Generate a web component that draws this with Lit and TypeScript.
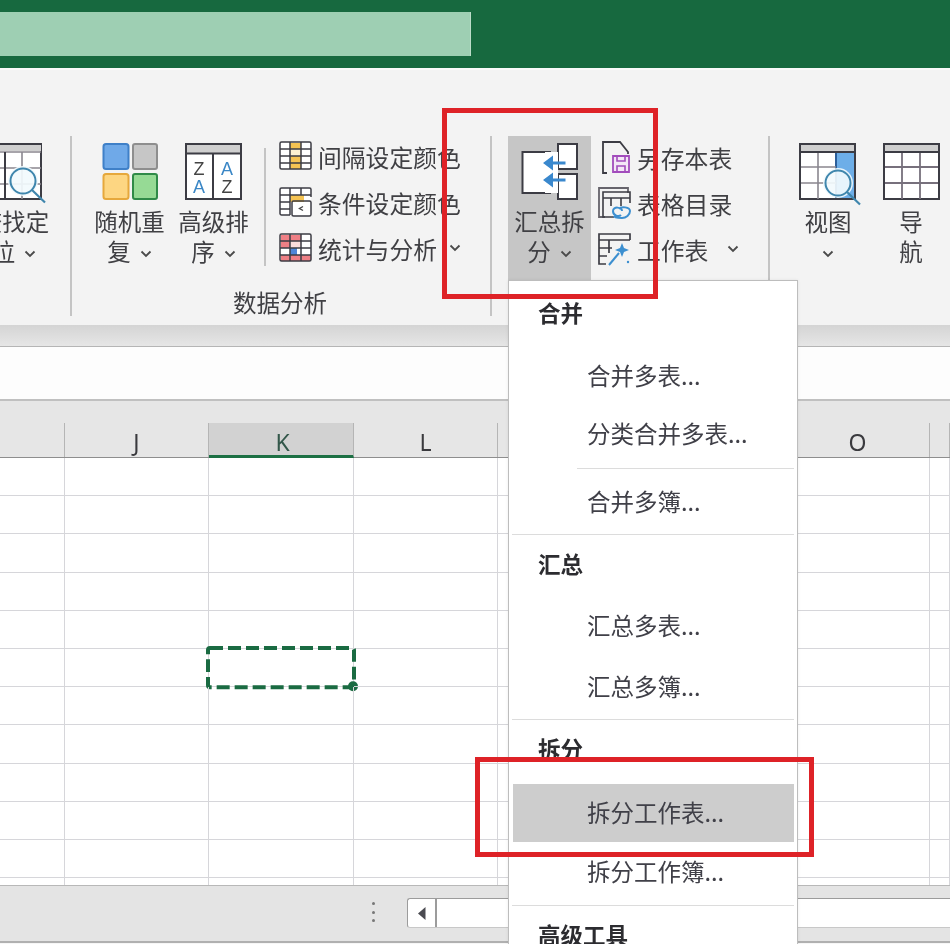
import { LitElement, html, css, svg } from "lit";
import { customElement } from "lit/decorators.js";

const chevPath = svg`<path d="M1.500 1.500 6 6l4.500-4.500" fill="none" stroke="#4a4a4a" stroke-width="1.800"/>`;
const chev = html`<svg class="chev" viewBox="0 0 12 8">${chevPath}</svg>`;
const chevAlone = html`<svg class="chev alone" viewBox="0 0 12 8">${chevPath}</svg>`;
const L = "#3c3c44";

const iconRandom = html`<svg class="ic58" viewBox="0 0 58 58">
  <rect x="2.500" y="1" width="25" height="25" rx="2.500" fill="#6fa9e8" stroke="#3f80c8" stroke-width="2"/>
  <rect x="32" y="1" width="24" height="25" rx="2" fill="#c6c6c6" stroke="#8e8e8e" stroke-width="2"/>
  <rect x="2.500" y="31" width="25" height="25" rx="2.500" fill="#fdd682" stroke="#e6a83c" stroke-width="2"/>
  <rect x="32" y="31" width="24" height="25" rx="2" fill="#96da95" stroke="#2f8a48" stroke-width="2"/>
</svg>`;
const iconSort = html`<svg class="ic58" viewBox="0 0 58 58">
  <rect x="1" y="1" width="55" height="55" fill="#fff" stroke="${L}" stroke-width="2"/>
  <rect x="2" y="2" width="53" height="8" fill="#cfcfcf"/><path d="M1 10.500H56M28 10v46" stroke="${L}" stroke-width="2"/>
  <text class="az" x="14" y="32" fill="#444">Z</text><text class="az" x="14" y="50" fill="#3b87c6">A</text>
  <text class="az" x="42" y="32" fill="#3b87c6">A</text><text class="az" x="42" y="50" fill="#444">Z</text>
</svg>`;
const lens = (cx: number, cy: number) => svg`<circle cx="${cx}" cy="${cy}" r="15" fill="#f2fafd" fill-opacity=".92"/><circle cx="${cx}" cy="${cy}" r="12.500" fill="none" stroke="#3f86ad" stroke-width="2"/><path d="M${cx + 9} ${cy + 9}l13 12.500" stroke="#3f86ad" stroke-width="2.200"/>`;
const iconFind = html`<svg class="ic58" viewBox="0 0 58 58">
  <rect x="-20" y="1" width="76" height="55" fill="#fff" stroke="${L}" stroke-width="2"/><rect x="-20" y="2" width="76" height="6" fill="#cfcfcf"/>
  <path d="M-20 9H56M-20 25H56M-20 41H56M37 9v47" stroke="#8a878f" stroke-width="1.600"/><path d="M20 9v47" stroke="${L}" stroke-width="2"/>
  ${lens(38, 38)}
</svg>`;
const iconView = html`<svg class="ic58" viewBox="0 0 58 58">
  <rect x="1" y="1" width="55" height="55" fill="#fff" stroke="${L}" stroke-width="2"/><rect x="2" y="2" width="53" height="7" fill="#cfcfcf"/>
  <rect x="37" y="9" width="18" height="46" fill="#6daee8"/><path d="M37 9v46" stroke="#2c5f9a" stroke-width="2"/>
  <path d="M2 24H37M2 40H37M19 9v47" stroke="#8a878f" stroke-width="1.600"/><path d="M1 9H56" stroke="${L}" stroke-width="2"/>
  ${lens(39, 40)}
</svg>`;
const iconNav = html`<svg class="ic58" viewBox="0 0 58 58">
  <rect x="2" y="1" width="55" height="55" fill="#fff" stroke="${L}" stroke-width="2"/><rect x="3" y="2" width="53" height="7" fill="#cfcfcf"/>
  <path d="M3 24H56M3 40H56M20 9v47M38 9v47" stroke="#77707c" stroke-width="1.800"/><path d="M2 9H57" stroke="${L}" stroke-width="2"/>
</svg>`;
const smallGrid = (fill: unknown) => html`<svg class="ic32" viewBox="0 0 33 30">
  <rect x="1" y="1" width="31" height="27" rx="1.500" fill="#fff"/>${fill}
  <g fill="none" stroke="${L}" stroke-width="1.500"><rect x="1" y="1" width="31" height="27" rx="1.500"/><path d="M1 8H32M1 15H32M1 22H32M11 1v27M22 1v27"/></g>
</svg>`;
const iconBand = smallGrid(svg`<rect x="11" y="2" width="11" height="6" fill="#f6c453"/><rect x="11" y="15" width="11" height="13" fill="#f6c453"/><rect x="11" y="8" width="11" height="7" fill="#fdf1d0"/>`);
const iconCond = html`<svg class="ic32" viewBox="0 0 33 30">
  <rect x="1" y="1" width="31" height="27" rx="1.500" fill="#fff"/><rect x="11" y="8" width="14" height="7" fill="#f6c453"/>
  <g fill="none" stroke="${L}" stroke-width="1.500"><path d="M11 28H2.500A1.500 1.500 0 0 1 1 26.500V2.500A1.500 1.500 0 0 1 2.500 1H30.500A1.500 1.500 0 0 1 32 2.500V10M1 8H32M1 15H11M1 22H11M11 1v27M22 1v7"/><rect x="13" y="14" width="19" height="15" rx="1.500"/></g>
  <path d="M24 19.500 20.500 21.500 24 23.500" fill="none" stroke="#444" stroke-width="1.400"/>
</svg>`;
const iconStat = smallGrid(svg`<rect x="2" y="2" width="20" height="13" fill="#ef7f85"/><rect x="11" y="8" width="11" height="7" fill="#fbdcdc"/><rect x="2" y="22" width="30" height="6" fill="#ef7f85"/><rect x="11" y="15" width="7" height="7" fill="#4f86d8"/>`);
const iconSplit = html`<svg class="ic58" viewBox="0 0 58 58">
  <path d="M30 9H1.500V50H30" fill="#fff" stroke="${L}" stroke-width="2"/>
  <rect x="37" y="1" width="19" height="25" fill="#fff" stroke="${L}" stroke-width="2"/>
  <rect x="37" y="31" width="19" height="25" fill="#fff" stroke="${L}" stroke-width="2"/>
  <rect x="24" y="9" width="13" height="41" fill="#fff"/>
  <path d="M44.500 20H30M44.500 37H30" stroke="#3a88cd" stroke-width="3"/>
  <path d="M22 20 32 12.500V27.500ZM22 37 32 29.500V44.500Z" fill="#3a88cd"/>
</svg>`;
const iconSave = html`<svg class="ic32 t" viewBox="-2 0 33 33">
  <path d="M7 32H3V1H20l8 10V13" fill="none" stroke="${L}" stroke-width="1.800"/>
  <path d="M13 15H29V31H13Z" fill="#f3e6f6" stroke="#a24cbc" stroke-width="1.800"/><path d="M17 15v5H25v-5M17 31v-6h8v6" fill="none" stroke="#a24cbc" stroke-width="1.600"/>
</svg>`;
const iconToc = html`<svg class="ic32 t" viewBox="0 0 33 33">
  <path d="M7 30H1V1H30V6" fill="none" stroke="#66646c" stroke-width="1.800"/>
  <path d="M16 30H5V5H32V16M5 11H32M13 11v8M23 11v8" fill="none" stroke="${L}" stroke-width="1.600"/>
  <path d="M24 24c0-4-9-5-9 0s6 6 8 4M21 22c2-3 11-2 11 2s-4 7-8 7-8-1-8-2" fill="none" stroke="#3c8fd0" stroke-width="2"/>
</svg>`;
const iconWand = html`<svg class="ic32 t" viewBox="0 0 33 33">
  <path d="M8 31H1V1H32V7M1 7H32M1 15H14M1 23H9M11 7v13" fill="none" stroke="${L}" stroke-width="1.700"/>
  <path d="M11 32 21 20" stroke="#3c8fd0" stroke-width="2"/><path d="M24 10l2 5 5 2-5 2-2 5-2-5-5-2 5-2z" fill="#3c8fd0"/><circle cx="30" cy="29" r="1.200" fill="#3c8fd0"/>
</svg>`;

const COLS = [65, 144, 145, 144, 144, 144, 144, 20];
const ROWS = 12;
const HEADS = ["", "J", "K", "L", "", "", "O", ""];

@customElement("app-root")
export class AppRoot extends LitElement {
  static styles = css`
    :host { display: block; width: 950px; height: 944px; overflow: hidden; position: relative; background: #fff;
      font-family: "Noto Sans CJK SC", "Noto Sans", sans-serif; color: #404044; }
    .page { width: 950px; height: 944px; display: flex; flex-direction: column; filter: blur(0.5px); }
    .title { height: 68px; flex: none; background: #17693f; padding-top: 12px; box-sizing: border-box; }
    .search { width: 470px; height: 44px; background: #9ecfb3; border-right: 1px solid #bcdcc9; }
    .ribbon { height: 257px; flex: none; background: #f3f3f3; border-top: 2px solid #fafafa; box-sizing: border-box; display: flex; padding-top: 66px; }
    .sep { width: 2px; background: #c4c4c4; flex: none; }
    .sep.full { height: 180px; }
    .sep.short { height: 118px; margin-top: 12px; margin-left: 9px; }
    .clip { width: 70px; flex: none; overflow: hidden; display: flex; justify-content: flex-end; }
    .big { width: 83px; flex: none; display: flex; flex-direction: column; align-items: center; padding-top: 7px; height: 145px; box-sizing: border-box; font-size: 23.500px; line-height: 30px; text-align: center; }
    .big.first { width: 85px; }
    .big.wide { width: 120px; margin-right: -4px; }
    .big.on { background: #c6c6c6; }
    .ic58 { width: 58px; height: 58px; margin-bottom: 5px; overflow: visible; flex: none; }
    .ic32 { width: 33px; height: 30px; flex: none; overflow: visible; }
    .ic32.t { height: 33px; margin: -1.500px 0 -1.500px -2px; }
    .az { font: 18px "Liberation Sans", sans-serif; text-anchor: middle; }
    .chev { width: 12px; height: 8px; margin-left: 9px; vertical-align: 3px; }
    .chev.alone { margin-left: 0; }
    .g1 { width: 418px; flex: none; display: flex; flex-direction: column; }
    .g1row { display: flex; height: 145px; padding-left: 15px; }
    .g1label { text-align: center; font-size: 23.500px; line-height: 30px; margin-top: 6px; padding-right: 2px; }
    .stack { display: flex; flex-direction: column; gap: 16px; padding-top: 5px; padding-left: 13px; font-size: 23.800px; white-space: nowrap; }
    .stack.b { padding-left: 9px; padding-top: 6px; width: 177px; box-sizing: border-box; flex: none; }
    .s { display: flex; align-items: center; height: 30px; gap: 6px; }
    .s .chev { margin-left: auto; }
    .stack.b .s { width: 139px; }
    .g2 { display: flex; margin-left: 16px; }
    .g3 { display: flex; margin-left: 16.500px; }
    .band { height: 22px; flex: none; background: linear-gradient(#d4d4d4, #e6e6e6); border-bottom: 1px solid #b5b5b5; box-sizing: border-box; }
    .fx { height: 54px; flex: none; background: #fdfdfd; border-bottom: 2px solid #c0c0c0; box-sizing: border-box; }
    .heads { height: 57px; flex: none; background: #e6e6e6; display: flex; align-items: flex-end; padding-top: 22px; box-sizing: border-box; border-bottom: 1.500px solid #8e8e8e; }
    .hd { height: 100%; box-sizing: border-box; border-right: 1.500px solid #b5b5b5; font: 23px "Noto Sans", sans-serif; line-height: 38px; text-align: center; color: #3a3a3e; flex: none; }
    .hd.on { background: #d2d2d2; border-bottom: 3px solid #1d7044; color: #33574a; margin-bottom: -1px; height: calc(100% + 1px); padding-left: 3px; }
    .sheet { flex: none; height: 427px; overflow: hidden; display: grid; grid-auto-rows: 38.200px; background: #fff; box-sizing: border-box; }
    .c { border-right: 1.500px solid #d6d6da; border-bottom: 1.500px solid #d6d6da; box-sizing: border-box; position: relative; }
    .marq { position: absolute; left: -3px; right: -3px; top: -3px; bottom: -3px; overflow: visible; width: calc(100% + 6px); height: calc(100% + 6px); }
    .marq rect { fill: none; stroke: #1a6b42; stroke-width: 4; stroke-dasharray: 13 5; }
    .marq circle { fill: #1a6b42; }
    .foot { flex: 1; background: #e4e4e4; border-top: 1.500px solid #b8b8b8; padding-top: 12px; box-sizing: border-box; display: flex; flex-direction: column; }
    .scroll { display: flex; align-items: flex-start; padding-left: 372px; height: 30px; flex: none; }
    .dots { width: 6px; display: flex; flex-direction: column; gap: 5.500px; padding-top: 4px; margin-right: 29px; flex: none; }
    .dots i { width: 3px; height: 3px; border-radius: 50%; background: #777; display: block; }
    .track { flex: 1; height: 30px; background: #fff; border: 1.500px solid #9c9c9c; border-bottom-color: #c8c8c8; border-right: 0; border-radius: 3px 0 0 3px; display: flex; box-sizing: border-box; }
    .arrow { width: 29px; flex: none; border-right: 2px solid #9c9c9c; box-sizing: border-box; display: flex; align-items: center; justify-content: center; }
    .arrow svg { width: 8px; height: 13px; }
    .rule { margin-top: 13px; height: 1.500px; background: #b0b0b0; flex: none; }
    .tail { flex: 1; background: #f6f6f6; }
    .menu { position: absolute; left: 508px; top: 280px; width: 290px; height: 680px; box-sizing: border-box; background: #fff; border: 1.500px solid #bdbdbd; border-bottom: 0; padding-top: 3px; box-shadow: 0 0 3px rgba(0,0,0,.08); filter: blur(0.5px); font-size: 23.500px; }
    .h { height: 58px; line-height: 56px; padding-left: 29px; font-weight: 700; font-size: 22.500px; color: #2c2c30; }
    .i { height: 58px; line-height: 57px; padding-left: 78px; color: #404048; white-space: nowrap; }
    .i.hl { background: #cdcdcd; margin: 6px 3px 0 4px; padding-left: 74px; }
    .ln { height: 1px; background: #dcdcdc; margin-left: 3px; margin-right: 3px; }
    .ln.in { margin-left: 68px; }
    .i.m1 { margin-top: 1px; } .i.m3, .ln.m3 { margin-top: 3px; } .i.m4, .ln.m4 { margin-top: 4px; } .i.m5, .ln.m5 { margin-top: 5px; }
    .red { position: absolute; box-sizing: border-box; border: 5px solid #de2227; pointer-events: none; filter: blur(0.4px); }
    .red.a { left: 442px; top: 108px; width: 216px; height: 191px; }
    .red.b { left: 475px; top: 757px; width: 339px; height: 100px; }
  `;

  render() {
    const cells = [];
    for (let r = 0; r < ROWS; r++) {
      for (let c = 0; c < COLS.length; c++) {
        const marq = r === 5 && c === 2
          ? html`<svg class="marq" viewBox="0 0 150 44" preserveAspectRatio="none"><rect x="2" y="2" width="146" height="40" rx="2"/><circle cx="147" cy="41" r="5"/></svg>`
          : "";
        cells.push(html`<div class="c">${marq}</div>`);
      }
    }
    return html`
      <div class="page">
        <div class="title"><div class="search"></div></div>
        <div class="ribbon">
          <div class="clip"><div class="big wide">${iconFind}<div>查找定<br />位${chev}</div></div></div>
          <div class="sep full"></div>
          <div class="g1">
            <div class="g1row">
              <div class="big first">${iconRandom}<div>随机重<br />复${chev}</div></div>
              <div class="big">${iconSort}<div>高级排<br />序${chev}</div></div>
              <div class="sep short"></div>
              <div class="stack">
                <div class="s">${iconBand}<span>间隔设定颜色</span></div>
                <div class="s">${iconCond}<span>条件设定颜色</span></div>
                <div class="s">${iconStat}<span>统计与分析</span>${chev}</div>
              </div>
            </div>
            <div class="g1label">数据分析</div>
          </div>
          <div class="sep full"></div>
          <div class="g2">
            <div class="big on">${iconSplit}<div>汇总拆<br />分${chev}</div></div>
            <div class="stack b">
              <div class="s">${iconSave}<span>另存本表</span></div>
              <div class="s">${iconToc}<span>表格目录</span></div>
              <div class="s">${iconWand}<span>工作表</span>${chev}</div>
            </div>
          </div>
          <div class="sep full"></div>
          <div class="g3">
            <div class="big">${iconView}<div>视图<br />${chevAlone}</div></div>
            <div class="big">${iconNav}<div>导<br />航</div></div>
          </div>
        </div>
        <div class="band"></div>
        <div class="fx"></div>
        <div class="heads">
          ${COLS.map((w, i) => html`<div class="hd ${i === 2 ? "on" : ""}" style="width:${w}px">${HEADS[i]}</div>`)}
        </div>
        <div class="sheet" style="grid-template-columns:${COLS.map((w) => w + "px").join(" ")}">${cells}</div>
        <div class="foot">
          <div class="scroll">
            <div class="dots"><i></i><i></i><i></i></div>
            <div class="track"><div class="arrow"><svg viewBox="0 0 8 13"><path d="M7.500 0v13L0 6.500z" fill="#4a4a50"/></svg></div></div>
          </div>
          <div class="rule"></div>
          <div class="tail"></div>
        </div>
      </div>
      <div class="menu">
        <div class="h">合并</div>
        <div class="i m5">合并多表...</div>
        <div class="i">分类合并多表...</div>
        <div class="ln in m5"></div>
        <div class="i m4">合并多簿...</div>
        <div class="ln m3"></div>
        <div class="h">汇总</div>
        <div class="i m4">汇总多表...</div>
        <div class="i m3">汇总多簿...</div>
        <div class="ln m3"></div>
        <div class="h">拆分</div>
        <div class="i hl">拆分工作表...</div>
        <div class="i m1">拆分工作簿...</div>
        <div class="ln m4"></div>
        <div class="h">高级工具</div>
      </div>
      <div class="red a"></div>
      <div class="red b"></div>
    `;
  }
}
